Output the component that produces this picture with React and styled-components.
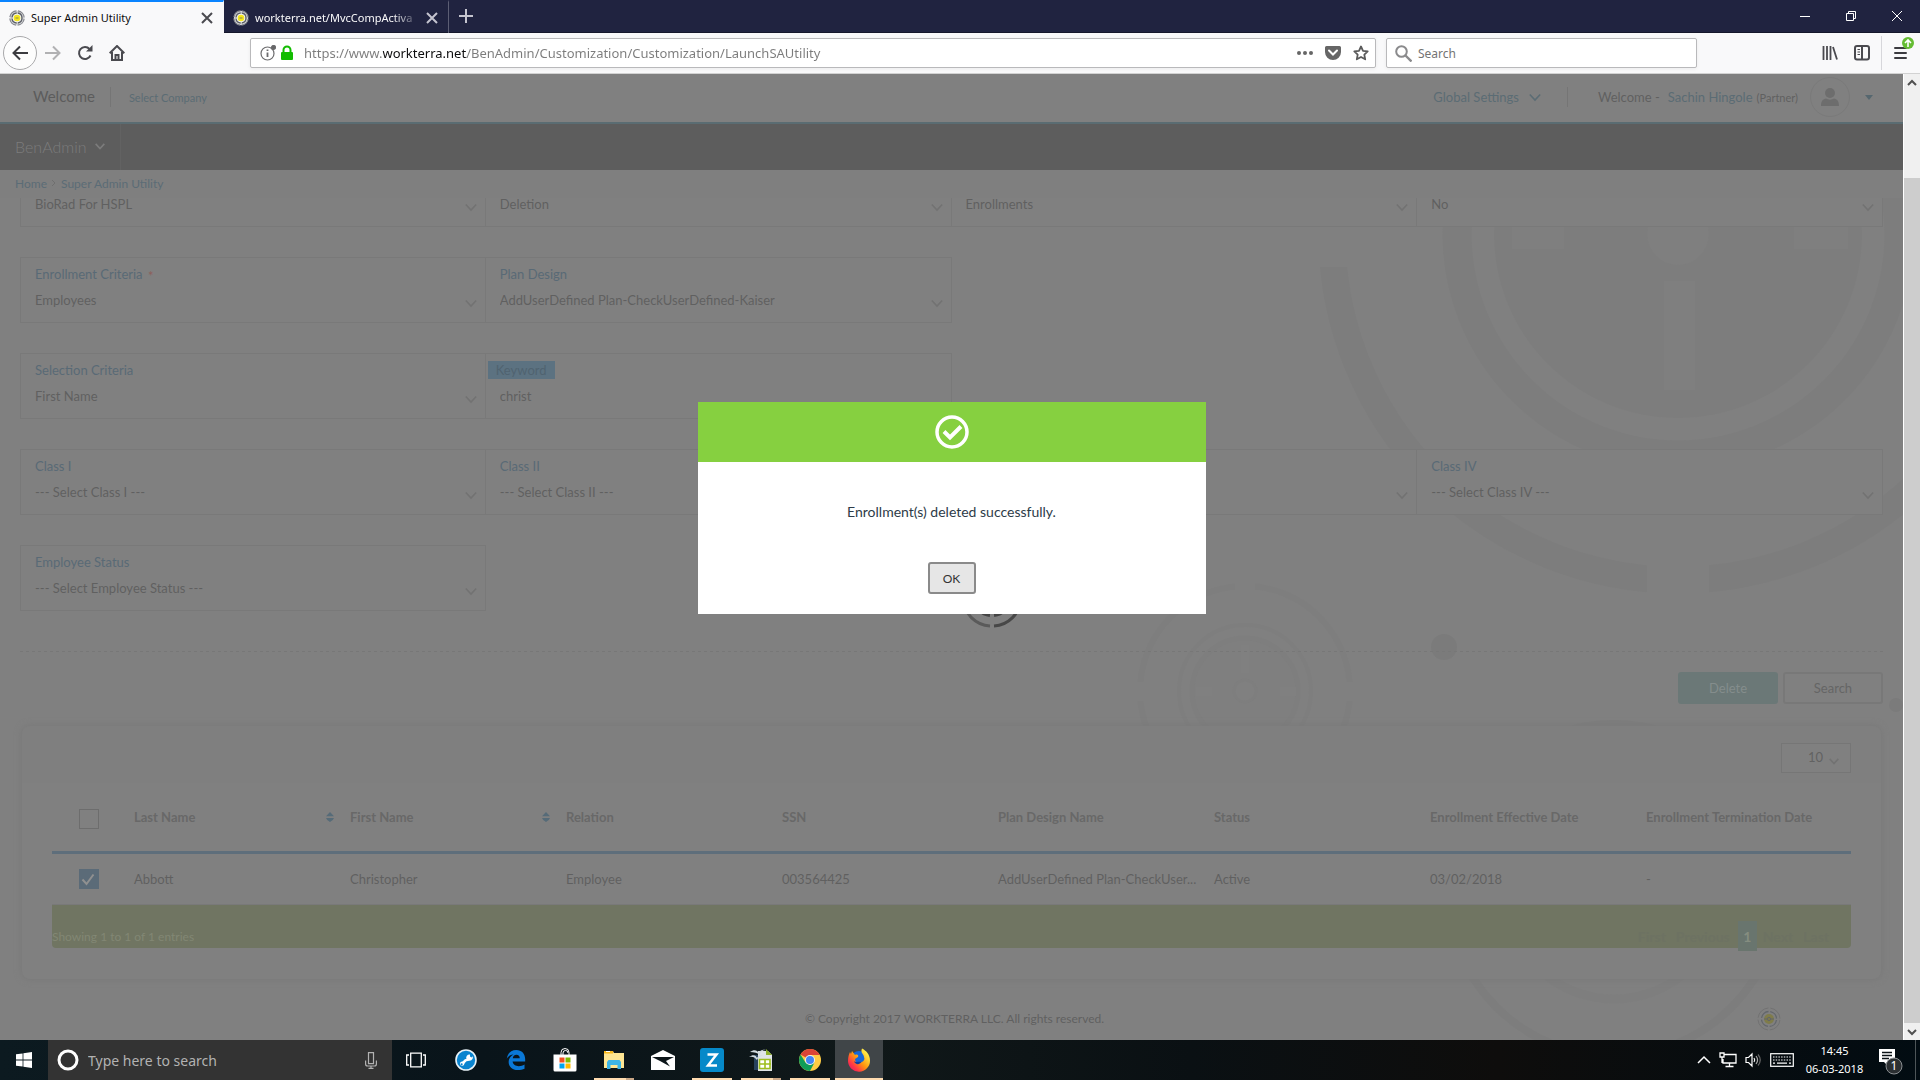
import React, { useState } from 'react';
import styled, { createGlobalStyle } from 'styled-components';

const GlobalStyle = createGlobalStyle`
	* { box-sizing: border-box; }
	body { margin: 0; overflow: hidden; }
	button, input, select { font: inherit; color: inherit; margin: 0; }
	button { background: none; border: 0; padding: 0; }
	a { text-decoration: none; }
	svg { display: block; flex: none; }
`;

const Desktop = styled.div`
	height: 100vh;
	display: flex;
	flex-direction: column;
	font-family: Lato, sans-serif;
	font-size: 13px;
	background: #808080;
`;

/* ---------- browser chrome ---------- */

const TabBar = styled.div`
	height: 33px;
	flex: none;
	display: flex;
	background: #202340;
	border-bottom: 1px solid #15172b;
	font-family: "Noto Sans", sans-serif;
	font-size: 11px;
`;

const Tab = styled.div`
	width: ${(p) => (p.$active ? '224px' : '225px')};
	height: 33px;
	display: flex;
	align-items: center;
	gap: 6px;
	padding: 0 10px 0 9px;
	color: ${(p) => (p.$active ? '#0c0c0d' : '#f9f9fa')};
	background: ${(p) => (p.$active ? '#f9f9fa' : 'transparent')};
	border-top: 2px solid ${(p) => (p.$active ? '#0a84ff' : 'transparent')};
	border-right: 1px solid ${(p) => (p.$active ? '#f9f9fa' : '#5c5e74')};
	span {
		flex: 1;
		overflow: hidden;
		white-space: nowrap;
		-webkit-mask-image: ${(p) => (p.$active ? 'none' : 'linear-gradient(90deg, #000 84%, transparent)')};
	}
`;

const NewTab = styled.button`
	width: 34px;
	display: grid;
	place-items: center;
	color: #c4c4cf;
`;

const WindowButtons = styled.div`
	margin-left: auto;
	display: flex;
	button {
		width: 46px;
		display: grid;
		place-items: center;
	}
`;

const Toolbar = styled.div`
	height: 41px;
	flex: none;
	display: flex;
	align-items: center;
	background: #f9f9fa;
	border-bottom: 1px solid #d2d2d2;
	font-family: "Noto Sans", sans-serif;
	font-size: 13px;
	color: #4a4a4f;
`;

const ToolButton = styled.button`
	width: 32px;
	height: 32px;
	display: grid;
	place-items: center;
	color: ${(p) => (p.$faded ? '#b1b1b3' : '#4a4a4f')};
`;

const BackButton = styled.button`
	width: 34px;
	height: 34px;
	margin: 0 0 0 3px;
	display: grid;
	place-items: center;
	border: 1px solid #a9a9ab;
	border-radius: 50%;
	background: #fdfdfd;
	color: #3c3c40;
`;

const Field = styled.div`
	height: 30px;
	display: flex;
	align-items: center;
	background: #fff;
	border: 1px solid #b9b9bb;
	border-radius: 2px;
	box-shadow: 0 1px 4px rgba(0, 0, 0, 0.06);
`;

const UrlField = styled(Field)`
	flex: 1;
	margin-left: 117px;
	padding: 0 6px 0 9px;
	gap: 4px;
`;

const SearchField = styled(Field)`
	width: 311px;
	margin: 0 117px 0 10px;
	padding-left: 8px;
	gap: 6px;
	font-size: 12px;
`;

// the domain is darker than the rest of the address
const UrlInput = styled.input`
	flex: 1;
	border: 0;
	outline: 0;
	padding: 0 0 0 6px;
	height: 24px;
	color: transparent;
	background: linear-gradient(90deg, #7b7b7b 85px, #0c0c0d 85px 169px, #7b7b7b 169px);
	-webkit-background-clip: text;
	background-clip: text;
`;

const SearchInput = styled.input`
	flex: 1;
	border: 0;
	outline: 0;
	padding: 0;
	background: none;
	&::placeholder { color: #737373; opacity: 1; }
`;

const FieldIcons = styled.div`
	display: flex;
	align-items: center;
	gap: 12px;
`;

const MenuButton = styled.button`
	position: relative;
	width: 39px;
	height: 34px;
	margin-left: 3px;
	border-left: 1px solid #d7d7db;
	display: grid;
	place-items: center;
	color: #3c3c40;
	svg:last-child { position: absolute; right: 6px; top: 1px; }
`;

/* ---------- web page ---------- */

const Viewport = styled.div`
	position: relative;
	flex: 1;
	min-height: 0;
	display: flex;
`;

const Page = styled.div`
	flex: 1;
	min-width: 0;
	display: flex;
	flex-direction: column;
	color: #606060;
`;

const Header = styled.header`
	height: 50px;
	flex: none;
	display: flex;
	align-items: center;
	padding: 0 30px 2px 33px;
	border-bottom: 2px solid #5a6c72;
	a { color: #5b6c74; }
`;

const Brand = styled.span`
	font-size: 15px;
	line-height: 20px;
	padding-bottom: 2px;
	color: #5c5c5c;
`;

const Rule = styled.i`
	width: 1px;
	height: 20px;
	margin: 0 ${(p) => p.$after}px 0 ${(p) => p.$before}px;
	background: #757575;
`;

const SmallLink = styled.a`
	font-size: 11px;
`;

const HeaderRight = styled.div`
	margin-left: auto;
	display: flex;
	align-items: center;
	small { font-size: 11px; margin-left: 4px; }
`;

const MenuLink = styled.a`
	display: flex;
	align-items: center;
	gap: 10px;
`;

const UserName = styled.a`
	margin-left: 8px;
`;

const Avatar = styled.span`
	width: 40px;
	height: 40px;
	margin: 0 15px 0 12px;
	border: 1px solid #7a7a7a;
	border-radius: 50%;
	display: grid;
	place-items: center;
`;

const Nav = styled.nav`
	height: 46px;
	flex: none;
	background: #5d5d5d;
	display: flex;
	button {
		display: flex;
		align-items: center;
		gap: 8px;
		width: 121px;
		padding: 0 0 2px 15px;
		font-size: 16px;
		font-weight: 300;
		color: #7c7c7c;
		border-right: 1px solid #626262;
	}
`;

const Crumbs = styled.nav`
	height: 28px;
	flex: none;
	display: flex;
	align-items: center;
	gap: 3px;
	padding: 0 0 2px 15px;
	font-size: 12px;
	color: #6f6f6f;
	background: #7f7f7f;
	a { color: #5b6c76; }
`;

const Main = styled.main`
	position: relative;
	flex: 1;
	min-height: 0;
	overflow: hidden;
	padding: 0 20px;
`;

const Backdrop = styled.svg`
	position: absolute;
	top: 0;
	right: 0;
`;

const Content = styled.div`
	position: relative;
`;

const Filters = styled.form`
	display: grid;
	row-gap: 30px;
`;

const FilterRow = styled.div`
	display: grid;
	grid-template-columns: repeat(4, 1fr);
`;

// $cut: the row that has been scrolled under the breadcrumbs, only its lower part shows
const Cell = styled.div`
	position: relative;
	height: ${(p) => (p.$cut ? '29px' : '66px')};
	padding: ${(p) => (p.$cut ? '0 14px' : '7px 14px')};
	background: #808080;
	border: 1px solid #797979;
	border-left-width: ${(p) => (p.$first ? '1px' : '0')};
	border-top-width: ${(p) => (p.$cut ? '0' : '1px')};
	label {
		display: block;
		line-height: 18px;
		color: #596a76;
	}
	em { color: #8d5f5b; font-style: normal; margin-left: 2px; line-height: 0; vertical-align: -2px; }
	select, input {
		display: block;
		width: 100%;
		height: ${(p) => (p.$cut ? '16px' : '22px')};
		margin-top: ${(p) => (p.$cut ? '-2px' : '6px')};
		padding: 0;
		border: 0;
		outline: 0;
		appearance: none;
		background: none;
		color: #606060;
	}
	svg { position: absolute; right: 8px; bottom: 13px; pointer-events: none; }
`;

const MarkedLabel = styled.label`
	&& {
		width: 67px;
		margin-left: -12px;
		padding-left: 8px;
		background: #5c7281;
		color: #506370;
	}
`;

const Divider = styled.hr`
	margin: 40px 0 20px;
	border: 0;
	height: 1px;
	background: repeating-linear-gradient(90deg, #777 0 3px, transparent 3px 6px);
`;

const Actions = styled.div`
	display: flex;
	justify-content: flex-end;
	gap: 5px;
	margin-bottom: 22px;
`;

const ActionButton = styled.button`
	width: 100px;
	height: 32px;
	border-radius: 3px;
	border: 2px solid ${(p) => (p.$primary ? '#6b7877' : '#787878')};
	background: ${(p) => (p.$primary ? '#6b7877' : '#808080')};
	color: ${(p) => (p.$primary ? '#848d8c' : '#656565')};
`;

const Card = styled.section`
	margin: 0 2px;
	padding-bottom: 31px;
	border-radius: 8px;
	background: #808080;
	box-shadow: 0 0 6px 1px #797979;
`;

const CardHead = styled.div`
	height: 57px;
	display: flex;
	justify-content: flex-end;
	padding: 17px 30px 0;
	border-radius: 8px 8px 0 0;
	background: #7f7f7f;
`;

const PageSize = styled.div`
	position: relative;
	width: 70px;
	height: 30px;
	background: #808080;
	border: 1px solid #767676;
	select {
		width: 100%;
		height: 26px;
		padding: 0 0 0 26px;
		border: 0;
		appearance: none;
		background: none;
		color: #626262;
		font-size: 13px;
	}
	svg { position: absolute; right: 11px; top: 12px; pointer-events: none; }
`;

const TableArea = styled.div`
	padding: 0 30px;
`;

const Table = styled.table`
	width: 100%;
	table-layout: fixed;
	border-collapse: separate;
	border-spacing: 0;
	text-align: left;
	th, td {
		padding: 0 0 0 11px;
		white-space: nowrap;
	}
	th {
		height: 71px;
		font-weight: 700;
		color: #686868;
		border-bottom: 3px solid #5e6e7b;
	}
	td {
		height: 51px;
		border-bottom: 1px solid #797979;
	}
	th:first-child, td:first-child { width: 71px; padding: 0 0 0 27px; }
	th:first-child { padding-top: 4px; }
`;

const HeadLabel = styled.div`
	display: flex;
	align-items: center;
	justify-content: space-between;
	padding-right: 5px;
`;

const Check = styled.input.attrs({ type: 'checkbox' })`
	display: block;
	appearance: none;
	width: 20px;
	height: 20px;
	border: 1px solid #6d6d6d;
	&:checked {
		border-color: #5b6b78;
		background: #5b6b78 url("data:image/svg+xml,%3Csvg xmlns='http://www.w3.org/2000/svg' viewBox='0 0 18 18'%3E%3Cpath d='M2.5 9.5l4 4.5 7-9.5' fill='none' stroke='%23909090' stroke-width='2'/%3E%3C/svg%3E");
	}
`;

const TableFoot = styled.div`
	height: 43px;
	display: flex;
	justify-content: space-between;
	padding: 16px 17px 0 0;
	border-radius: 0 0 4px 4px;
	background: #707562;
	color: #828774;
	font-size: 12px;
	line-height: 32px;
`;

const Pager = styled.div`
	display: flex;
	height: 30px;
	font-size: 14px;
	font-weight: 700;
	button { height: 30px; padding: 0 5px; color: #6d7262; }
	button[aria-current] {
		width: 19px;
		margin: 0 1px 0 3px;
		background: #69756e;
		color: #858d80;
	}
`;

const Copyright = styled.footer`
	position: relative;
	margin: 28px -20px 0;
	padding-left: 6px;
	height: 24px;
	line-height: 24px;
	text-align: center;
	font-size: 12px;
	svg { position: absolute; right: 122px; top: 0; }
`;

const Scrollbar = styled.div`
	width: 17px;
	display: flex;
	flex-direction: column;
	background: #f0f0f0;
	border-left: 1px solid #fff;
	button { height: 17px; display: grid; place-items: center; }
	div { flex: 1; margin-top: 87px; background: #cdcdcd; }
`;

/* ---------- dialog ---------- */

const Overlay = styled.div`
	position: absolute;
	inset: 0 17px 0 0;
	padding-top: 328px;
	display: flex;
	justify-content: center;
	align-items: flex-start;
`;

const Spinner = styled.svg`
	position: absolute;
	top: 492px;
	left: calc(50% + 9px);
`;

const Dialog = styled.div`
	position: relative;
	width: 508px;
	background: #fff;
	color: #2d3b48;
	text-align: center;
	font-size: 14px;
`;

const DialogHead = styled.div`
	height: 60px;
	display: grid;
	place-items: center;
	background: #86d040;
`;

const DialogText = styled.p`
	margin: 0;
	padding: 40px 0;
	line-height: 20px;
`;

const OkButton = styled.button`
	width: 48px;
	height: 32px;
	margin-bottom: 20px;
	border: 2px solid #8a8a8a;
	border-radius: 3px;
	background: #e6e6e6;
	color: #333;
	font-size: 12px;
	vertical-align: top;
`;

/* ---------- taskbar ---------- */

const Taskbar = styled.div`
	height: 40px;
	flex: none;
	display: flex;
	background: linear-gradient(90deg, #0c1a20, #09141a 25%, #101819 45%, #0a1013 62%, #0e0d0c 78%, #020c12);
	font-family: "Noto Sans", sans-serif;
	color: #fff;
`;

const TaskButton = styled.button`
	position: relative;
	width: ${(p) => (p.$wide ? '50px' : '48px')};
	margin-right: ${(p) => (p.$tight ? '0' : '1px')};
	display: grid;
	place-items: center;
	background: ${(p) => (p.$active ? '#404548' : 'none')};
	&::after {
		content: "";
		display: ${(p) => (p.$open ? 'block' : 'none')};
		position: absolute;
		bottom: 0;
		left: ${(p) => (p.$active ? '0' : '4px')};
		right: ${(p) => (p.$active ? '0' : '4px')};
		height: 2px;
		background: ${(p) => (p.$many ? 'linear-gradient(90deg, #ffdcb0 32px, #c9a787 32px)' : '#ffdcb0')};
	}
`;

const TaskSearch = styled.div`
	width: 344px;
	display: flex;
	align-items: center;
	gap: 8px;
	padding: 0 15px 0 8px;
	background: #333;
	font-size: 14px;
	input {
		flex: 1;
		min-width: 0;
		border: 0;
		outline: 0;
		padding: 0;
		background: none;
	}
	input::placeholder { color: #b2b2b2; opacity: 1; }
`;

const Tray = styled.div`
	margin-left: auto;
	display: flex;
	align-items: center;
	gap: 8px;
`;

const Clock = styled.div`
	width: 65px;
	font-size: 11px;
	line-height: 18px;
	text-align: center;
`;

const ShowDesktop = styled.button`
	width: 5px;
	height: 40px;
	border-left: 1px solid #4e5558;
`;

/* ---------- drawings ---------- */

const Line = ({ d, size = 16, box = 16, width = 2, children, ...rest }) => (
	<svg width={size} height={size} viewBox={`0 0 ${box} ${box}`} fill="none" stroke="currentColor" strokeWidth={width} {...rest}>
		{d && <path d={d} />}
		{children}
	</svg>
);

const Chevron = ({ size = 12, color = '#727272', width = 1.6 }) => (
	<svg width={size} height={size} viewBox="0 0 12 12" fill="none" stroke={color} strokeWidth={width}>
		<path d="M.8 3.500L6 9l5.200-5.500" />
	</svg>
);

const Favicon = () => (
	<svg width="16" height="16" viewBox="0 0 16 16" fill="none">
		<circle cx="8" cy="8" r="7.2" fill="#d9dadd" stroke="#85878d" strokeWidth="1.2" strokeDasharray="9.8 1.5" strokeDashoffset="-0.8" />
		<circle cx="8" cy="8" r="5" fill="#f4f4f0" stroke="#5d6068" strokeWidth="1.4" strokeDasharray="6.9 1" />
		<circle cx="8" cy="8" r="3.3" fill="#f4e61e" />
		<path d="M6.5 8h3" stroke="#8a8750" />
	</svg>
);

const SmallLogo = () => (
	<svg width="24" height="24" viewBox="0 0 24 24" fill="none">
		<circle cx="12" cy="12" r="11" stroke="#727272" strokeDasharray="15.3 2" strokeDashoffset="-1" />
		<circle cx="12" cy="12" r="7.5" stroke="#62666b" strokeWidth="1.3" strokeDasharray="10 1.8" strokeDashoffset="-1" />
		<circle cx="12" cy="12" r="5" fill="#7f7c4a" />
		<circle cx="12" cy="12" r="1.6" stroke="#62656b" />
		<path d="M7 12h3m4 0h3" stroke="#62656b" />
	</svg>
);

const SortIcon = () => (
	<svg width="8" height="10" viewBox="0 0 8 10" fill="#566b78">
		<path d="M0 4.3L4 0l4 4.3zM0 6h8L6.8 8 4 10 1.2 8z" />
	</svg>
);

const BackdropArt = () => (
	<Backdrop width="780" height="842" viewBox="1123 198 780 842" fill="none">
		<circle cx="1678" cy="234" r="184" fill="#7d7d7d" />
		<circle cx="1678" cy="234" r="221" stroke="#7d7d7d" strokeWidth="29" />
		<circle cx="1678" cy="234" r="346" stroke="#7d7d7d" strokeWidth="27" />
		<path d="M1647 560h62v40h-62zM1315 200h40v67h-40z" fill="#808080" />
		<path d="M1512 220h52v29h-52zM1794 220h54v29h-54z" fill="#7f7f7f" />
		<circle cx="1678" cy="234" r="31" fill="#7f7f7f" />
		<path d="M1664 281h31v109h-31z" fill="#7f7f7f" />

		<g stroke="#7e7e7e">
			<circle cx="1245" cy="691" r="105" strokeWidth="6" />
			<circle cx="1245" cy="691" r="66" strokeWidth="4" />
			<circle cx="1245" cy="691" r="53" strokeWidth="5" fill="#7f7f7f" />
		</g>
		<path d="M1235 580h20v12h-20zM1137 682h12v19h-12zM1341 682h12v19h-12zM1241 645h8v28h-8zM1196 687h16v9h-16zM1280 687h16v9h-16z" fill="#808080" />
		<circle cx="1245" cy="691" r="11" fill="#808080" stroke="#7e7e7e" strokeWidth="3" />

		<circle cx="1444" cy="647" r="13" fill="#7b7b7b" />
		<circle cx="1896" cy="705" r="7" fill="#7b7b7b" />
		<circle cx="1614" cy="890" r="166" stroke="#7d7d7d" strokeWidth="8" />
		<circle cx="1614" cy="890" r="109" stroke="#7e7e7e" strokeWidth="9" />
	</Backdrop>
);

const DeskIcon = ({ name }) => {
	if (name === 'tasks') return <svg width="20" height="18" viewBox="0 0 20 18" fill="none" stroke="#fff" strokeWidth="1.3"><path d="M4.7 2.2h10.6v13.6H4.700zM3 4H.7v10H3M17 4h2.300v10H17" /></svg>;
	if (name === 'wrench') return (
		<svg width="22" height="22" viewBox="0 0 22 22">
			<circle cx="11" cy="11" r="10" fill="#0a84cf" stroke="#e8f2f8" strokeWidth="1.6" />
			<path d="M7.500 14.500l3-3.200 3-.8" fill="none" stroke="#fff" strokeWidth="2.600" />
			<path d="M11.500 10a3.200 3.200 0 0 1 3.500-4.500v2l1.500 1 1.200-1.300c.8 3-1.700 5-4.700 4.600z" fill="#fff" />
			<circle cx="7.200" cy="14.600" r="2.200" fill="#fff" /><circle cx="6.700" cy="15.200" r="1" fill="#0a84cf" />
		</svg>
	);
	if (name === 'edge') return (
		<svg width="22" height="22" viewBox="0 0 24 24" fill="#0a78d7">
			<path d="M1.900 10.700C2.600 5 6.500 1 12.300 1c6 0 9.700 4.200 9.700 10v2.700H8.300c.3 3.500 3.400 5 6.700 5 2.300 0 4.500-.7 6.300-1.800v4.700C19.300 22.600 16.700 23 14 23 7.900 23 4 19.300 4 14.200c0-3.700 2.200-6.600 5.300-8.100-4 .4-6.200 2.200-7.400 4.600zM8.500 10h7.600c0-2.300-1.300-3.700-3.600-3.700-2.400 0-3.700 1.600-4 3.700z" />
		</svg>
	);
	if (name === 'store') return (
		<svg width="24" height="24" viewBox="0 0 24 24">
			<path d="M8 7V4.500a4 4 0 0 1 8 0V7M10 7V5a2.500 2.500 0 0 1 5 0" fill="none" stroke="#fff" />
			<path d="M.5 6.500h23V22a1.500 1.500 0 0 1-1.500 1.500H2A1.500 1.500 0 0 1 .5 22z" fill="#fff" />
			<path d="M6.500 9.500h5v5h-5z" fill="#f25022" /><path d="M12.500 9.500h5v5h-5z" fill="#7fba00" />
			<path d="M6.500 15.500h5v5h-5z" fill="#00a4ef" /><path d="M12.500 15.500h5v5h-5z" fill="#ffb900" />
		</svg>
	);
	if (name === 'files') return (
		<svg width="22" height="20" viewBox="0 0 22 20">
			<path d="M1 1h9l1 2h10v15H1z" fill="#ffe693" /><path d="M1 1h9v2.500H1z" fill="#f8b81c" /><path d="M3 1h4v1H3z" fill="#fff" />
			<path d="M4 19v-7l1.500-2h11L18 12v7h-3.500v-4h-7v4z" fill="#3db5e6" />
		</svg>
	);
	if (name === 'mail') return (
		<svg width="24" height="20" viewBox="0 0 24 20"><path d="M0 6L12 0l12 6v14H0z" fill="#fff" /><path d="M1 7h22l-8 4 4 5.500L9 11z" fill="#0c1519" /></svg>
	);
	if (name === 'zoomit') return (
		<svg width="24" height="24" viewBox="0 0 24 24"><rect width="24" height="24" rx="3" fill="#0689c9" /><path d="M7.500 6.500h9L8 17.500h9" fill="none" stroke="#fff" strokeWidth="2.500" /></svg>
	);
	if (name === 'calc') return (
		<svg width="24" height="24" viewBox="0 0 24 24">
			<path d="M5 7h9v15H5z" fill="#28425e" /><path d="M9 3h10l4 4v16H9z" fill="#dfe4e6" /><path d="M17 1l6 6h-6z" fill="#8db12a" />
			<path d="M10.500 11.500h10.500v9H10.500z" fill="#fff" stroke="#9ebd1e" strokeWidth="1.600" /><path d="M16 11v10M10 16h12" stroke="#9ebd1e" strokeWidth="1.600" />
			<path d="M1 4c4-3 7-2 9 1 1-3 4-4 7-3-4 0-6 2-6 5-2-2-6-3-10-3zM0 9c4-3 7-2 8 1 1-2 3-3 6-2-4 0-5 2-6 4C6 9 3 8 0 9z" fill="#d2dbe0" />
		</svg>
	);
	if (name === 'chrome') return (
		<svg width="22" height="22" viewBox="0 0 22 22">
			<circle cx="11" cy="11" r="11" fill="#fc4" />
			<path d="M11 11L1.500 5.500A11 11 0 0 1 20.500 5.500L20.500 6H11z" fill="#db4437" />
			<path d="M1.500 5.500A11 11 0 0 0 11 22l4.500-8.500L11 16l-4.500-2.500z" fill="#0f9d58" />
			<circle cx="11" cy="11" r="5" fill="#f1f1f1" /><circle cx="11" cy="11" r="4" fill="#4285f4" />
		</svg>
	);
	return (
		<svg width="24" height="24" viewBox="0 0 24 24">
			<defs>
				<linearGradient id="fox" x1="1" y1="0" x2="0" y2="1"><stop offset=".15" stopColor="#fff04a" /><stop offset=".5" stopColor="#ff980e" /><stop offset=".75" stopColor="#ff3647" /><stop offset="1" stopColor="#d6126c" /></linearGradient>
			</defs>
			<circle cx="12" cy="11" r="8" fill="#1567d8" />
			<path d="M15 .5c4 2 8 6 8 12A11 11 0 0 1 1 13C1 9 2 6 3 4l1 2 1-3 3 4c2-1 4 0 3 2l-3 2c0 4 4 5 7 3 2-1 3-3 2-5 0-3-4-4-2-8.500z" fill="url(#fox)" />
			<path d="M7 13c2 2 5 0 7 1-1 3-6 3-7-1z" fill="#123e9a" />
		</svg>
	);
};

/* ---------- data ---------- */

const filterRows = [
	[
		{ label: 'Company', value: 'BioRad For HSPL', cut: true },
		{ label: 'Action', value: 'Deletion', cut: true },
		{ label: 'Module', value: 'Enrollments', cut: true },
		{ label: 'Option', value: 'No', cut: true },
	],
	[
		{ label: 'Enrollment Criteria', value: 'Employees', required: true },
		{ label: 'Plan Design', value: 'AddUserDefined Plan-CheckUserDefined-Kaiser' },
	],
	[
		{ label: 'Selection Criteria', value: 'First Name' },
		{ label: 'Keyword', value: 'christ', text: true },
	],
	[
		{ label: 'Class I', value: '--- Select Class I ---' },
		{ label: 'Class II', value: '--- Select Class II ---' },
		{ label: 'Class III', value: '--- Select Class III ---' },
		{ label: 'Class IV', value: '--- Select Class IV ---' },
	],
	[{ label: 'Employee Status', value: '--- Select Employee Status ---' }],
];

const columns = [
	['Last Name', 'Abbott', true],
	['First Name', 'Christopher', true],
	['Relation', 'Employee'],
	['SSN', '003564425'],
	['Plan Design Name', 'AddUserDefined Plan-CheckUser...'],
	['Status', 'Active'],
	['Enrollment Effective Date', '03/02/2018'],
	['Enrollment Termination Date', '-'],
];

const tasks = [
	{ name: 'tasks', label: 'Task View' },
	{ name: 'wrench', label: 'Support', wide: true },
	{ name: 'edge', label: 'Edge' },
	{ name: 'store', label: 'Store' },
	{ name: 'files', label: 'File Explorer', open: true, many: true },
	{ name: 'mail', label: 'Mail' },
	{ name: 'zoomit', label: 'Zimbra', open: true },
	{ name: 'calc', label: 'Calc', open: true, many: true },
	{ name: 'chrome', label: 'Chrome', open: true },
	{ name: 'firefox', label: 'Firefox', open: true, active: true },
];

const FilterField = ({ item, first }) => {
	const [value, setValue] = useState(item.value);
	const id = item.label.toLowerCase().replace(/ /g, '-');
	const change = (e) => setValue(e.target.value);

	if (item.text) {
		return (
			<Cell $first={first}>
				<MarkedLabel htmlFor={id}>{item.label}</MarkedLabel>
				<input id={id} value={value} onChange={change} />
			</Cell>
		);
	}
	return (
		<Cell $first={first} $cut={item.cut}>
			{!item.cut && <label htmlFor={id}>{item.label} {item.required && <em>*</em>}</label>}
			<select id={id} aria-label={item.label} value={value} onChange={change}>
				<option>{item.value}</option>
			</select>
			<Chevron />
		</Cell>
	);
};

const Browser = () => (
	<>
		<TabBar>
			<Tab $active>
				<Favicon />
				<span>Super Admin Utility</span>
				<Line d="M1 1l10 10M11 1L1 11" size={12} box={12} stroke="#4a4a4f" />
			</Tab>
			<Tab>
				<Favicon />
				<span>workterra.net/MvcCompActiva</span>
				<Line d="M1 1l10 10M11 1L1 11" size={12} box={12} stroke="#c4c4cf" />
			</Tab>
			<NewTab aria-label="New tab"><Line d="M8 1v14M1 8h14" /></NewTab>
			<WindowButtons>
				<button aria-label="Minimize"><Line d="M0 5.500h10" size={10} box={10} width={1} stroke="#fff" /></button>
				<button aria-label="Restore"><Line d="M.5 2.500h7v7h-7zM2.500 2.500v-2h7v7h-2" size={10} box={10} width={1} stroke="#fff" /></button>
				<button aria-label="Close"><Line d="M0 0l10 10M10 0L0 10" size={10} box={10} width={1} stroke="#fff" /></button>
			</WindowButtons>
		</TabBar>
		<Toolbar>
			<BackButton aria-label="Back"><Line d="M16 8H1.500M8 1.500L1.500 8 8 14.500" /></BackButton>
			<ToolButton aria-label="Forward" $faded><Line d="M0 8h14.500M8 1.500L14.500 8 8 14.500" /></ToolButton>
			<ToolButton aria-label="Reload">
				<Line size={16}><path d="M13.500 10.500A6 6 0 1 1 12.500 4" /><path d="M9 6.500h6.500V0z" fill="currentColor" stroke="none" /></Line>
			</ToolButton>
			<ToolButton aria-label="Home">
				<Line size={16}><path d="M.7 8.200L8 1l7.300 7.200M3 7v8h10V7" /><path d="M6.500 15v-5h3v5z" /></Line>
			</ToolButton>
			<UrlField>
				<Line size={16} width={1.2} stroke="#6c6c6e"><circle cx="7.500" cy="8.500" r="6.500" /><path d="M7.500 7.500V12M7.500 4.500V6" strokeWidth="1.800" /><circle cx="13.500" cy="2.500" r="2" fill="#666" /></Line>
				<svg width="14" height="16" viewBox="0 0 14 16"><path d="M3.500 8V5a3.500 3.500 0 0 1 7 0v3" fill="none" stroke="#12bc00" strokeWidth="2" /><rect x="1" y="7" width="12" height="8" rx="1" fill="#12bc00" /></svg>
				<UrlInput aria-label="Address" defaultValue="https://www.workterra.net/BenAdmin/Customization/Customization/LaunchSAUtility" />
				<FieldIcons>
					<svg width="16" height="16" viewBox="0 0 16 16" fill="#666"><circle cx="2" cy="8" r="2" /><circle cx="8" cy="8" r="2" /><circle cx="14" cy="8" r="2" /></svg>
					<svg width="16" height="16" viewBox="0 0 16 16"><path d="M1.500 1h13A1.500 1.500 0 0 1 16 2.500V7a8 8 0 0 1-16 0V2.500A1.500 1.500 0 0 1 1.500 1z" fill="#666" /><path d="M4 5.500L8 9.500l4-4" fill="none" stroke="#fff" strokeWidth="2" strokeLinecap="round" /></svg>
					<svg width="16" height="16" viewBox="0 0 16 16" fill="none" stroke="#5a5a5a" strokeWidth="1.800" strokeLinejoin="round"><path d="M8 1.500l2 4.300 4.700.6-3.400 3.200.9 4.700L8 12l-4.200 2.300.9-4.700L1.300 6.400 6 5.800z" /></svg>
				</FieldIcons>
			</UrlField>
			<SearchField>
				<Line size={17} box={17} stroke="#8a8a8c"><circle cx="6.500" cy="6.500" r="5.300" /><path d="M10.500 10.500l6 6" strokeWidth="2.400" /></Line>
				<SearchInput aria-label="Search the web" placeholder="Search" />
			</SearchField>
			<ToolButton aria-label="Library"><Line d="M1.500 1v14M5 1v14M8.500 1v14M11 2l4 12.500" width={1.8} /></ToolButton>
			<ToolButton aria-label="Sidebars"><Line><rect x="1" y="1" width="14" height="13.500" rx="2" /><path d="M8 1v14" /><path d="M3.500 4.500H6M3.500 7H6M3.500 9.500H6" strokeWidth="1" /></Line></ToolButton>
			<MenuButton aria-label="Menu">
				<Line size={14} box={14}><path d="M1 2h11M1 7h11M1 12h11" strokeLinecap="round" /></Line>
				<svg width="12" height="12" viewBox="0 0 12 12"><circle cx="6" cy="6" r="6" fill="#65bc33" /><path d="M6 10V3M3 6l3-3 3 3" fill="none" stroke="#fff" strokeWidth="1.600" /></svg>
			</MenuButton>
		</Toolbar>
	</>
);

const Results = () => (
	<Card>
		<CardHead>
			<PageSize>
				<select aria-label="Entries per page"><option>10</option></select>
				<Chevron size={10} width={2} />
			</PageSize>
		</CardHead>
		<TableArea>
			<Table>
				<thead>
					<tr>
						<th><Check aria-label="Select all" /></th>
						{columns.map(([name, , sortable]) => (
							<th key={name}><HeadLabel>{name}{sortable && <SortIcon />}</HeadLabel></th>
						))}
					</tr>
				</thead>
				<tbody>
					<tr>
						<td><Check aria-label="Select Abbott" defaultChecked /></td>
						{columns.map(([name, value]) => <td key={name}>{value}</td>)}
					</tr>
				</tbody>
			</Table>
			<TableFoot>
				<span>Showing 1 to 1 of 1 entries</span>
				<Pager>
					<button>First</button>
					<button>Previous</button>
					<button aria-current="page">1</button>
					<button>Next</button>
					<button>Last</button>
				</Pager>
			</TableFoot>
		</TableArea>
	</Card>
);

const App = () => {
	const [open, setOpen] = useState(true);

	return (
		<Desktop>
			<GlobalStyle />
			<Browser />
			<Viewport>
				<Page>
					<Header>
						<Brand>Welcome</Brand>
						<Rule $before={15} $after={18} />
						<SmallLink href="#company">Select Company</SmallLink>
						<HeaderRight>
							<MenuLink href="#settings">Global Settings <Chevron color="#5b6c74" /></MenuLink>
							<Rule $before={26} $after={30} />
							<span>Welcome -</span>
							<UserName href="#profile">Sachin Hingole</UserName>
							<small>(Partner)</small>
							<Avatar>
								<svg width="18" height="18" viewBox="0 0 18 18" fill="#6d6d6d"><circle cx="9" cy="5" r="5" /><path d="M0 18c0-5 2-7 5-7.500 2.500 1.500 5.500 1.500 8 0 3 .5 5 2.500 5 7.500z" /></svg>
							</Avatar>
							<svg width="8" height="5" viewBox="0 0 8 5" fill="#56676f"><path d="M0 0h8L4 5z" /></svg>
						</HeaderRight>
					</Header>
					<Nav><button>BenAdmin <Chevron size={10} color="#7c7c7c" width={2} /></button></Nav>
					<Crumbs>
						<a href="#home">Home</a>
						<Line d="M2 1l3 3-3 3" size={8} box={8} width={1} />
						<a href="#utility">Super Admin Utility</a>
					</Crumbs>
					<Main>
						<BackdropArt />
						<Content>
							<Filters>
								{filterRows.map((row, i) => (
									<FilterRow key={i}>
										{row.map((item, j) => <FilterField key={item.label} item={item} first={j === 0} />)}
									</FilterRow>
								))}
							</Filters>
							<Divider />
							<Actions>
								<ActionButton $primary>Delete</ActionButton>
								<ActionButton>Search</ActionButton>
							</Actions>
							<Results />
							<Copyright>© Copyright 2017 WORKTERRA LLC. All rights reserved.<SmallLogo /></Copyright>
						</Content>
					</Main>
				</Page>
				<Scrollbar>
					<button aria-label="Scroll up"><Line d="M1 7l4-4 4 4" size={10} box={10} stroke="#505050" /></button>
					<div />
					<button aria-label="Scroll down"><Line d="M1 3l4 4 4-4" size={10} box={10} stroke="#505050" /></button>
				</Scrollbar>
				{open && (
					<Overlay>
						<Spinner width="62" height="62" viewBox="0 0 62 62" fill="none">
							<path d="M2 33a29 29 0 0 0 27 27" stroke="#5a5a5a" strokeWidth="3" />
							<path d="M33 60a29 29 0 0 0 27-27" stroke="#474747" strokeWidth="3" />
							<path d="M13 33a18 18 0 0 0 16 16M33 49a18 18 0 0 0 16-16" stroke="#444" strokeWidth="4" />
						</Spinner>
						<Dialog role="alertdialog" aria-label="Success">
							<DialogHead>
								<svg width="34" height="34" viewBox="0 0 34 34" fill="none" stroke="#fff"><circle cx="17" cy="17" r="15" strokeWidth="3.500" /><path d="M9 16.500l6 6 11-11" strokeWidth="4" /></svg>
							</DialogHead>
							<DialogText>Enrollment(s) deleted successfully.</DialogText>
							<OkButton onClick={() => setOpen(false)}>OK</OkButton>
						</Dialog>
					</Overlay>
				)}
			</Viewport>
			<Taskbar>
				<TaskButton $tight aria-label="Start">
					<svg width="16" height="16" viewBox="0 0 16 16" fill="#fff"><path d="M0 2.300L6.600 1.400v6.200H0zM7.400 1.300L16 0v7.600H7.400zM0 8.400h6.600v6.200L0 13.700zM7.400 8.400H16V16l-8.600-1.300z" /></svg>
				</TaskButton>
				<TaskSearch>
					<svg width="24" height="24" viewBox="0 0 24 24" fill="none" stroke="#fff" strokeWidth="3"><circle cx="12" cy="12" r="9" /></svg>
					<input aria-label="Type here to search" placeholder="Type here to search" />
					<svg width="12" height="17" viewBox="0 0 12 17" fill="none" stroke="#b2b2b2" strokeWidth="1.200"><path d="M3.500.6h5v11h-5zM.6 8.500v3.500q0 2 2 2h6.800q2 0 2-2V8.500M6 14v2M3.500 16.300h5" /></svg>
				</TaskSearch>
				{tasks.map((t) => (
					<TaskButton key={t.name} aria-label={t.label} $wide={t.wide} $open={t.open} $many={t.many} $active={t.active}>
						<DeskIcon name={t.name} />
					</TaskButton>
				))}
				<Tray>
					<Line d="M1 10l6-6 6 6" size={14} box={14} width={1.5} />
					<svg width="18" height="16" viewBox="0 0 18 16" fill="none" stroke="#fff" strokeWidth="1.300"><path d="M5 2.500h12v8.500H4V7M10.500 11v4M6.500 14.500h8M1 1h4v4H1zM3 5v6" /></svg>
					<svg width="17" height="16" viewBox="0 0 17 16" fill="none" stroke="#fff" strokeWidth="1.200"><path d="M1 5.500h2.500L7 2v12l-3.500-3.500H1zM9 6q1.500 2 0 4" /><path d="M11 4q3.200 4 0 8" stroke="#aaa" /><path d="M13 2.500q4.500 5.500 0 11" stroke="#666" /></svg>
					<svg width="24" height="14" viewBox="0 0 24 14" fill="none" stroke="#fff" strokeWidth="1.200"><rect x=".7" y=".7" width="22.600" height="12.600" /><path d="M3 4h18M3 7h18" strokeDasharray="1.500 1.200" /><path d="M3 10.200h2M7 10.200h10M19 10.200h2" /></svg>
					<Clock>14:45<br />06-03-2018</Clock>
					<svg width="32" height="30" viewBox="0 0 32 30">
						<path d="M4 4h16v13h-7v4l-4-4H4z" fill="#fff" /><path d="M7 7.500h10M7 10.500h10M7 13.500h7" stroke="#0a1216" strokeWidth="1.300" />
						<circle cx="19" cy="21" r="8" fill="#2b2f32" stroke="#8b8f92" />
						<text x="19" y="25" fill="#fff" fontSize="12" textAnchor="middle">1</text>
					</svg>
					<ShowDesktop aria-label="Show desktop" />
				</Tray>
			</Taskbar>
		</Desktop>
	);
};

export default App;
